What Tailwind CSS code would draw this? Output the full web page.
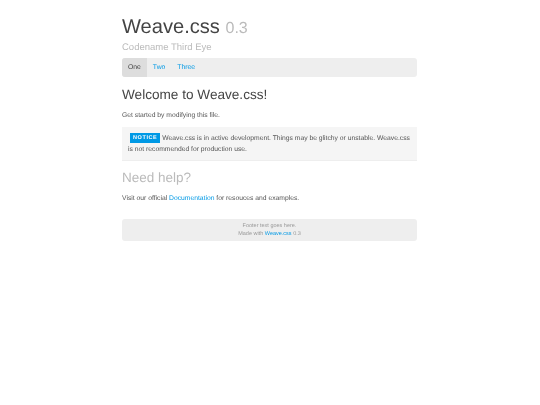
<!DOCTYPE html>
<html lang="en">
<head>
    <meta charset="UTF-8">
    <title>Weave.css</title>
    <script src="https://cdn.jsdelivr.net/npm/@tailwindcss/browser@4"></script>
</head>
<body class="bg-white text-[#555] font-['Liberation_Sans',Arial,sans-serif] [text-rendering:geometricPrecision]">
    <div class="w-[295px] ml-[122px] pt-[15px] blur-[0.3px]">
        <!-- Header -->
        <h1 class="text-[20.1px] leading-[24px] text-[#444]">Weave.css <small class="text-[16px] text-[#bbb]">0.3</small></h1>
        <p class="text-[9.5px] leading-[12px] mt-[1px] text-[#bbb]">Codename Third Eye</p>

        <!-- Nav -->
        <nav class="flex mt-[4px] h-[19px] bg-[#eee] rounded-[3px] text-[6.8px] leading-[19px]">
            <a class="px-[6px] bg-[#ddd] rounded-l-[3px] text-[#444]">One</a>
            <a class="px-[6px] text-[#0099e5]">Two</a>
            <a class="px-[6px] text-[#0099e5]">Three</a>
        </nav>

        <!-- Main -->
        <h2 class="text-[13.6px] leading-[18px] mt-[9px] text-[#444]">Welcome to Weave.css!</h2>
        <p class="text-[6.75px] leading-[10px] mt-[7px]">Get started by modifying this file.</p>

        <div class="mt-[6px] h-[34px] pl-[6px] pr-[4px] pt-[6px] bg-[#f5f5f5] border-b border-[#eee] text-[6.75px] leading-[11px]">
            <span class="inline-block ml-[2px] px-[3px] h-[10px] leading-[10px] bg-[#0099e5] text-white text-[5.5px] font-bold tracking-[0.6px] align-middle">NOTICE</span>
            Weave.css is in active development. Things may be glitchy or unstable. Weave.css is not recommended for production use.
        </div>

        <h2 class="text-[13.5px] leading-[18px] mt-[8px] text-[#bbb]">Need help?</h2>
        <p class="text-[6.75px] leading-[10px] mt-[7px]">Visit our official <a class="text-[#0099e5]">Documentation</a> for resouces and examples.</p>

        <!-- Footer -->
        <footer class="mt-[15px] h-[22px] pt-[3px] bg-[#eee] rounded-[3px] text-center text-[5.5px] leading-[8px] text-[#999]">
            <p>Footer text goes here.</p>
            <p>Made with <a class="text-[#0099e5]">Weave.css</a> 0.3</p>
        </footer>
    </div>
</body>
</html>
